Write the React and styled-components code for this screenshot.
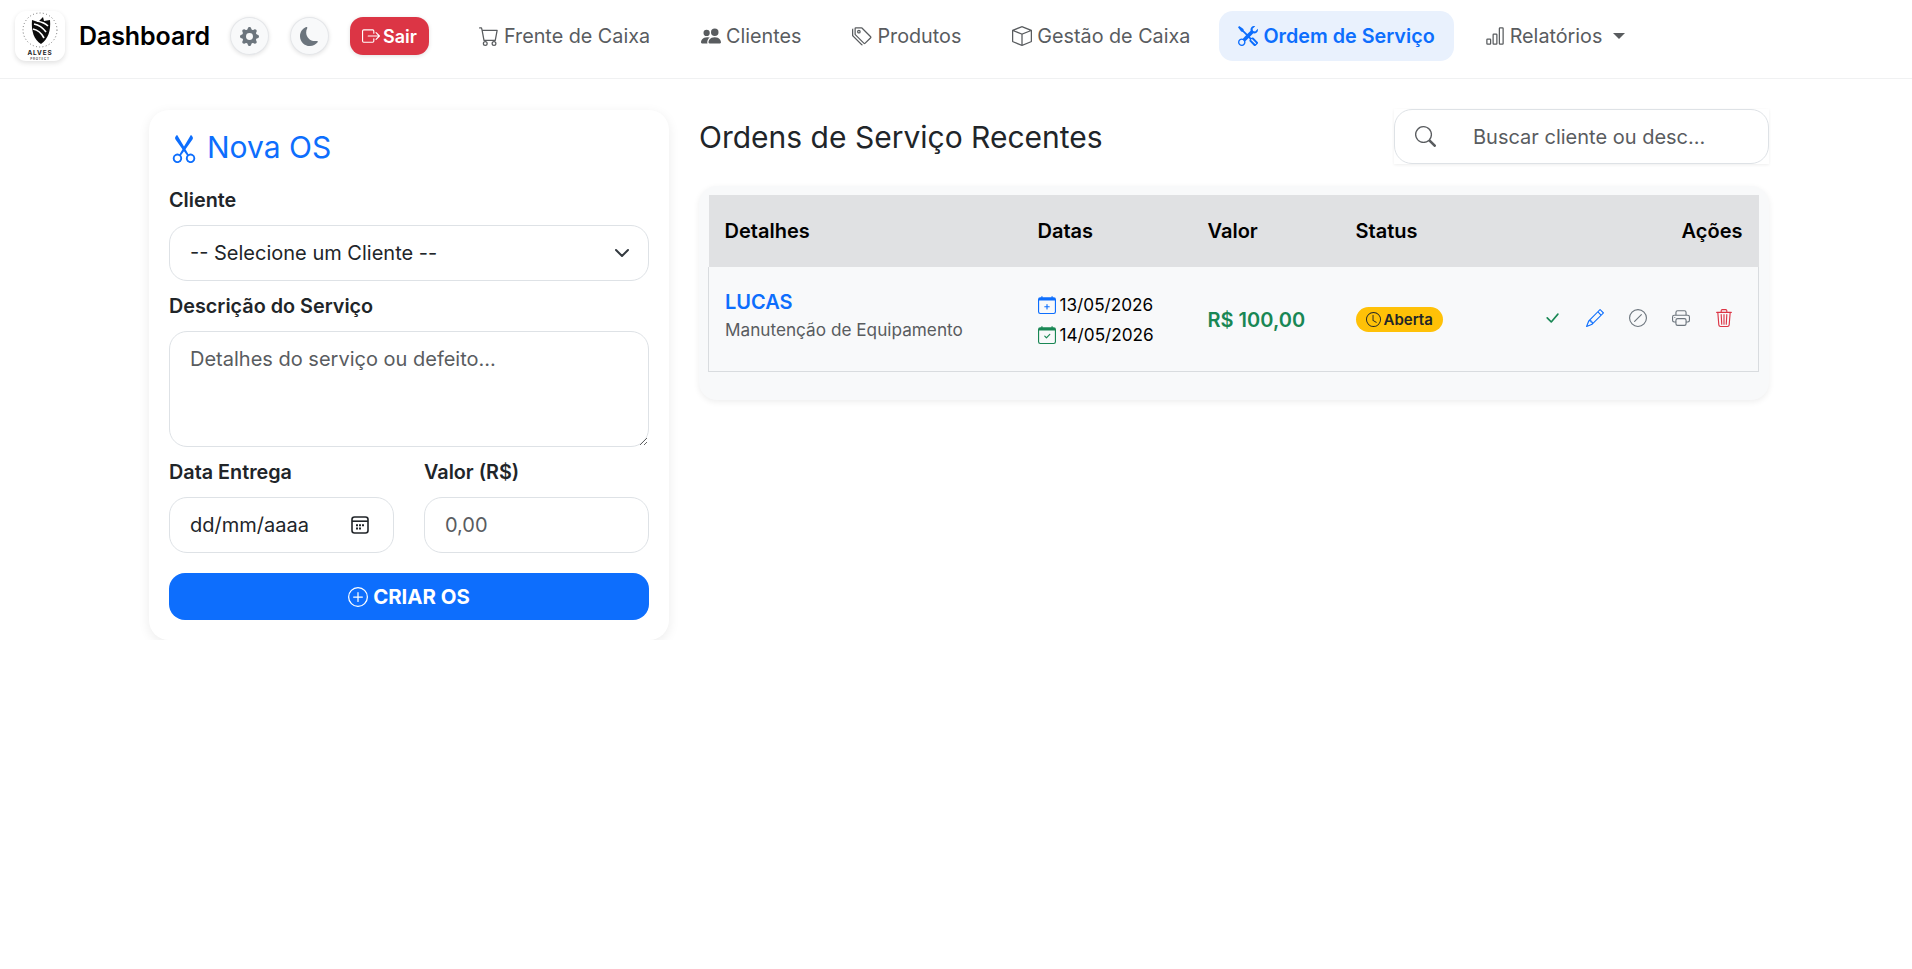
import React from "react";
import styled, { createGlobalStyle } from "styled-components";
import {
  BsGearFill, BsMoonFill, BsBoxArrowRight, BsCart, BsPeopleFill, BsTags, BsBox, BsTools, BsBarChart,
  BsScissors, BsPlusCircle, BsSearch, BsCalendarPlus, BsCalendarCheck, BsClock, BsCheckLg, BsPencil,
  BsSlashCircle, BsPrinter, BsTrash3,
} from "react-icons/bs";

const Global = createGlobalStyle`
  html, body { margin: 0; padding: 0; background: #fff; }
  body { font-family: Inter, "Liberation Sans", sans-serif; font-size: 20px; color: #212529; }
  * { box-sizing: border-box; }
`;

const TopBar = styled.header`
  height: 79px; display: flex; align-items: center; padding: 0 15px 6px; border-bottom: 1px solid #f0f1f2; background: #fff;
`;
const LogoTile = styled.div`
  width: 50px; height: 50px; border-radius: 11px; background: #fff; box-shadow: 0 2px 5px rgba(0,0,0,.12); flex: none;
  svg { display: block; }
`;
const Brand = styled.div`font-size: 25px; font-weight: 600; color: #000; margin-left: 14px; width: 151px; letter-spacing: -0.1px;`;
const RoundButton = styled.button`
  width: 39px; height: 38px; border-radius: 50%; border: 1px solid #e4e6e9; background: #f8f9fa; color: #6c757d;
  display: flex; align-items: center; justify-content: center; font-size: 19px; padding: 0; margin-right: 21px;
  box-shadow: 0 1px 4px rgba(0,0,0,.12);
`;
const LogoutButton = styled.button`
  width: 79px; height: 38px; border-radius: 13px; border: 0; background: #dc3545; color: #fff;
  display: flex; align-items: center; justify-content: center; gap: 3px; font: 600 18px Inter, sans-serif;
  box-shadow: 0 1px 4px rgba(0,0,0,.12); padding: 0;
`;
const Nav = styled.nav`display: flex; align-items: center; gap: 15px; margin-left: 32px;`;
const NavLink = styled.a`
  display: flex; align-items: center; gap: 5px; height: 50px; padding: 0 18px; border-radius: 14px; font-size: 19.75px;
  color: #595c5f; white-space: nowrap;
`;
const ActiveNavLink = styled(NavLink)`
  color: #0d6efd; font-weight: 600; background: #e9f1fd; padding: 0 19px; margin: 0 -2px 0 -4px;
`;
const Caret = styled.span`
  width: 0; height: 0; border-top: 6px solid #595c5f; border-left: 6px solid transparent; border-right: 6px solid transparent; margin-left: 6px;
`;

const Content = styled.main`display: flex; align-items: flex-start; gap: 30px; padding: 31px 143px 0 149px;`;
const FormCard = styled.section`
  width: 520px; flex: none; padding: 19px 20px 20px; height: 530px; background: #fff; border-radius: 20px; box-shadow: 0 3px 12px rgba(0,0,0,.08);
`;
const FormTitle = styled.h2`
  margin: 0 0 22px; font-size: 30px; font-weight: 400; color: #0d6efd; line-height: 37px; display: flex; align-items: center; gap: 8px;
`;
const Label = styled.label`display: block; font-weight: 600; font-size: 19.8px; line-height: 24px; color: #212529; margin-bottom: 13px;`;
const fieldBase = `
  width: 100%; border: 1px solid #dee2e6; border-radius: 18px; background: #fff; padding: 0 20px;
  font: 400 20px Inter, sans-serif; color: #212529; outline: none;
`;
const Select = styled.select`
  ${fieldBase} height: 56px; appearance: none; margin-bottom: 13px;
  background-image: url("data:image/svg+xml,%3csvg xmlns='http://www.w3.org/2000/svg' viewBox='0 0 16 16'%3e%3cpath fill='none' stroke='%23343a40' stroke-linecap='round' stroke-linejoin='round' stroke-width='2' d='m2 5 6 6 6-6'/%3e%3c/svg%3e");
  background-repeat: no-repeat; background-position: right 18px center; background-size: 16px 16px;
`;
const TextArea = styled.textarea`
  ${fieldBase} display: block; height: 116px; padding-top: 14px; line-height: 27px; margin-bottom: 13px; resize: vertical;
  &::placeholder { color: #595c5f; opacity: 1; }
`;
const TwoCols = styled.div`display: grid; grid-template-columns: 225px 225px; gap: 30px; margin-bottom: 20px;`;
const Input = styled.input`
  ${fieldBase} height: 56px;
  &::placeholder { color: #595c5f; opacity: 1; }
`;
const DateField = styled.div`
  ${fieldBase} height: 56px; display: flex; align-items: center; justify-content: space-between; padding-right: 24px;
`;
const SubmitButton = styled.button`
  width: 100%; height: 47px; border: 0; border-radius: 16px; background: #0d6efd; color: #fff; display: flex; align-items: center; justify-content: center;
  gap: 5px; font: 700 20.4px Inter, sans-serif; padding: 0;
`;

const ListColumn = styled.section`flex: 1; min-width: 0;`;
const ListHeader = styled.div`display: flex; align-items: center; justify-content: space-between; height: 55px; margin: -1px 0 22px;`;
const ListTitle = styled.h2`margin: 0; font-size: 30px; font-weight: 400; color: #212529;`;
const SearchShell = styled.div`width: 375px; height: 55px; background: #fff; box-shadow: 0 1px 3px rgba(0,0,0,.07);`;
const SearchBox = styled.div`
  height: 100%; display: flex; align-items: center; border: 1px solid #dee2e6; border-radius: 18px; background: #fff; padding-left: 20px;
  svg { font-size: 21px; color: #595c5f; flex: none; }
`;
const SearchInput = styled.input`
  flex: 1; min-width: 0; border: 0; outline: none; background: transparent; font: 400 20px Inter, sans-serif; margin-left: 37px; padding: 0;
  &::placeholder { color: #595c5f; opacity: 1; }
`;
const TableCard = styled.div`
  height: 214px; background: #f8f9fa; padding: 9px 10px 9px 9px; border-radius: 18px; box-shadow: 0 2px 6px rgba(0,0,0,.07);
`;
const Table = styled.table`width: 100%; border-collapse: collapse; table-layout: fixed;`;
const Th = styled.th`
  height: 72px; background: #e0e1e3; color: #000; font-weight: 600; font-size: 20px; padding: 0 16px;
  text-align: ${(p) => (p.$right ? "right" : "left")};
`;
const Row = styled.tr`background: #f8f9fa; border: 1px solid #d9dcdf; border-top: 0;`;
const Td = styled.td`height: 104px; padding: 0 16px; vertical-align: middle;`;
const Customer = styled.div`color: #0d6efd; font-weight: 600; font-size: 20px; line-height: 24px; margin-bottom: 5px;`;
const Service = styled.div`color: #595c5f; font-size: 17.2px; line-height: 22px; margin-bottom: 6px;`;
const DateLine = styled.div`
  display: flex; align-items: center; gap: 4px; font-size: 17.2px; color: #000; line-height: 30px;
  &:first-of-type { margin-top: 2px; }
  svg { font-size: 18px; color: ${(p) => p.$color}; }
`;
const Amount = styled.div`color: #198754; font-weight: 600; font-size: 20px; margin-top: 2px;`;
const Badge = styled.span`
  display: flex; width: fit-content; align-items: center; gap: 3px; height: 25px; padding: 0 10px; border-radius: 13px; background: #ffc107; color: #212529; font-size: 15px; font-weight: 600; margin-top: 2px;
  svg { font-size: 15px; }
`;
const Actions = styled.div`display: flex; justify-content: flex-end; align-items: center; gap: 25px; padding-right: 9px; margin-top: -2px;`;
const ActionButton = styled.button`
  border: 0; background: transparent; padding: 0; width: 18px; height: 18px; display: flex; align-items: center; justify-content: center; font-size: 18px;
  color: ${(p) => p.$color};
`;

const Logo = () => (
  <svg width="50" height="50" viewBox="0 0 50 50">
    <circle cx="25" cy="19" r="17" fill="none" stroke="#555" strokeWidth="0.9" strokeDasharray="0.9 2.4" />
    <path d="M17 9 L23 11 L28 6 L29 10 L35 9 C36 20 33 28 26 33 C19 29 16 20 17 9 Z" fill="#0b0b0b" />
    <path d="M19 13 C24 14 28 17 31 21 M18 18 C23 19 27 23 29 27 M22 10 C27 11 31 13 33 15" stroke="#fff" strokeWidth="1.7" fill="none" />
    <text x="25" y="44" textAnchor="middle" fontSize="6.4" fontWeight="700" letterSpacing="0.9" fontFamily="Inter, sans-serif" fill="#222">ALVES</text>
    <text x="25" y="48.5" textAnchor="middle" fontSize="3" fontWeight="600" letterSpacing="0.8" fontFamily="Inter, sans-serif" fill="#444">PROTECT</text>
  </svg>
);

const DatePickerIcon = () => (
  <svg width="18" height="18" viewBox="0 0 18 18">
    <rect x="1" y="1" width="16" height="16" rx="2.5" fill="none" stroke="#212529" strokeWidth="1.6" />
    <path d="M1 5.2h16" stroke="#212529" strokeWidth="1.6" />
    <path d="M5 8.2h2v2H5zM8 8.2h2v2H8zM11 8.2h2v2h-2zM5 11.5h2v2H5zM8 11.5h2v2H8z" fill="#212529" />
  </svg>
);

export default function App() {
  return (
    <>
      <Global />
      <TopBar>
        <LogoTile><Logo /></LogoTile>
        <Brand>Dashboard</Brand>
        <RoundButton aria-label="Configurações"><BsGearFill /></RoundButton>
        <RoundButton aria-label="Tema"><BsMoonFill /></RoundButton>
        <LogoutButton><BsBoxArrowRight size={18} />Sair</LogoutButton>
        <Nav>
          <NavLink><BsCart size={20} />Frente de Caixa</NavLink>
          <NavLink><BsPeopleFill size={20} />Clientes</NavLink>
          <NavLink><BsTags size={20} />Produtos</NavLink>
          <NavLink><BsBox size={20} />Gestão de Caixa</NavLink>
          <ActiveNavLink><BsTools size={20} />Ordem de Serviço</ActiveNavLink>
          <NavLink><BsBarChart size={20} />Relatórios<Caret /></NavLink>
        </Nav>
      </TopBar>
      <Content>
        <FormCard>
          <FormTitle><BsScissors size={30} />Nova OS</FormTitle>
          <Label>Cliente</Label>
          <Select defaultValue=""><option value="">-- Selecione um Cliente --</option></Select>
          <Label>Descrição do Serviço</Label>
          <TextArea placeholder="Detalhes do serviço ou defeito..." />
          <TwoCols>
            <div>
              <Label>Data Entrega</Label>
              <DateField>dd/mm/aaaa<DatePickerIcon /></DateField>
            </div>
            <div>
              <Label>Valor (R$)</Label>
              <Input placeholder="0,00" />
            </div>
          </TwoCols>
          <SubmitButton><BsPlusCircle size={20} />CRIAR OS</SubmitButton>
        </FormCard>
        <ListColumn>
          <ListHeader>
            <ListTitle>Ordens de Serviço Recentes</ListTitle>
            <SearchShell>
              <SearchBox><BsSearch /><SearchInput placeholder="Buscar cliente ou desc..." /></SearchBox>
            </SearchShell>
          </ListHeader>
          <TableCard>
            <Table>
              <colgroup>
                <col style={{ width: 313 }} /><col style={{ width: 170 }} /><col style={{ width: 148 }} /><col style={{ width: 150 }} /><col />
              </colgroup>
              <thead>
                <tr><Th>Detalhes</Th><Th>Datas</Th><Th>Valor</Th><Th>Status</Th><Th $right>Ações</Th></tr>
              </thead>
              <tbody>
                <Row>
                  <Td><Customer>LUCAS</Customer><Service>Manutenção de Equipamento</Service></Td>
                  <Td>
                    <DateLine $color="#0d6efd"><BsCalendarPlus />13/05/2026</DateLine>
                    <DateLine $color="#198754"><BsCalendarCheck />14/05/2026</DateLine>
                  </Td>
                  <Td><Amount>R$ 100,00</Amount></Td>
                  <Td><Badge><BsClock />Aberta</Badge></Td>
                  <Td>
                    <Actions>
                      <ActionButton $color="#198754"><BsCheckLg /></ActionButton>
                      <ActionButton $color="#0d6efd"><BsPencil /></ActionButton>
                      <ActionButton $color="#6c757d"><BsSlashCircle /></ActionButton>
                      <ActionButton $color="#6c757d"><BsPrinter /></ActionButton>
                      <ActionButton $color="#dc3545"><BsTrash3 /></ActionButton>
                    </Actions>
                  </Td>
                </Row>
              </tbody>
            </Table>
          </TableCard>
        </ListColumn>
      </Content>
    </>
  );
}
